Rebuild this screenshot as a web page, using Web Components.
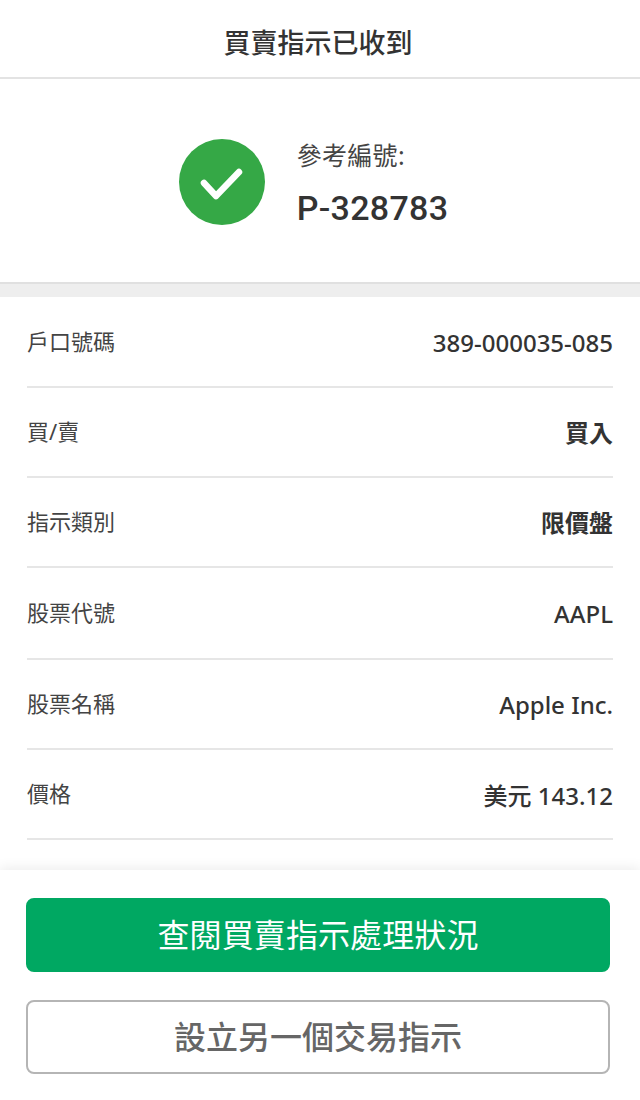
<!DOCTYPE html>
<html lang="zh-Hant">
<head>
<meta charset="utf-8">
<title>買賣指示已收到</title>
<style>
  html, body { margin: 0; height: 100%; background: #fff; }
  body {
    font-family: "Noto Sans", "Noto Sans CJK TC", sans-serif;
    color: #333;
  }
</style>
</head>
<body>
<order-page>
  <title-bar>買賣指示已收到</title-bar>
  <ref-banner label="參考編號:" code="P-328783"></ref-banner>
  <detail-list>
    <detail-row label="戶口號碼" value="389-000035-085"></detail-row>
    <detail-row label="買/賣" value="買入" strong></detail-row>
    <detail-row label="指示類別" value="限價盤" strong></detail-row>
    <detail-row label="股票代號" value="AAPL" tall></detail-row>
    <detail-row label="股票名稱" value="Apple Inc."></detail-row>
    <detail-row label="價格" value="美元 143.12"></detail-row>
  </detail-list>
  <action-bar>
    <action-button kind="primary">查閱買賣指示處理狀況</action-button>
    <action-button>設立另一個交易指示</action-button>
  </action-bar>
</order-page>
<script>
  function define(name, css, html) {
    customElements.define(name, class extends HTMLElement {
      constructor() {
        super();
        this.attachShadow({ mode: "open" });
      }
      connectedCallback() {
        this.shadowRoot.innerHTML = `<style>${css}</style>${typeof html === "function" ? html(this) : html}`;
      }
    });
  }

  define("order-page", `
    :host { display: flex; flex-direction: column; height: 1100px; overflow: hidden; }
  `, `<slot></slot>`);

  define("title-bar", `
    :host {
      display: flex; align-items: center; justify-content: center;
      height: 72px; padding: 5px 4px 0 0; border-bottom: 2px solid #e3e3e3;
      font-size: 27px; font-weight: 500; color: #333; box-sizing: content-box;
    }
  `, `<slot></slot>`);

  define("ref-banner", `
    :host {
      display: flex; align-items: center; justify-content: center; gap: 32px;
      height: 203px; border-bottom: 2px solid #e0e0e0; padding-right: 13px;
      box-sizing: content-box;
    }
    svg { display: block; margin-top: 2px; }
    .text { padding-top: 6px; }
    .label { font-size: 25px; line-height: 32px; color: #444; letter-spacing: 0.3px; }
    .code { font-family: Roboto, sans-serif; font-size: 34px; font-weight: 500; line-height: 40px; margin-top: 17px; letter-spacing: 0.3px; color: #333; }
  `, el => `
    <svg width="86" height="86" viewBox="0 0 86 86">
      <circle cx="43" cy="43" r="43" fill="#35a846"/>
      <path d="M25 44 L37 57 L60 33" fill="none" stroke="#fff" stroke-width="6.5" stroke-linecap="round" stroke-linejoin="round"/>
    </svg>
    <div class="text">
      <div class="label">${el.getAttribute("label")}</div>
      <div class="code">${el.getAttribute("code")}</div>
    </div>
  `);

  define("detail-list", `
    :host { display: block; border-top: 13px solid #eeeeee; padding: 1px 27px 0; flex: 1; }
  `, `<slot></slot>`);

  define("detail-row", `
    :host {
      display: flex; align-items: center; justify-content: space-between;
      height: 88px; border-bottom: 2px solid #e6e6e6; box-sizing: content-box;
    }
    :host([tall]) { height: 90px; }
    .label { font-size: 22px; color: #444; padding-bottom: 4px; }
    .value { font-size: 24px; font-weight: 500; color: #333; padding-top: 1px; }
    :host([strong]) .value { font-weight: 700; padding-top: 0; padding-bottom: 1px; }
  `, el => `
    <span class="label">${el.getAttribute("label")}</span>
    <span class="value">${el.getAttribute("value")}</span>
  `);

  define("action-bar", `
    :host {
      display: flex; flex-direction: column; gap: 28px;
      height: 230px; box-sizing: border-box; padding: 28px 30px 0 26px;
      background: #fff; box-shadow: 0 -2px 12px rgba(0,0,0,.08);
    }
  `, `<slot></slot>`);

  define("action-button", `
    :host {
      display: flex; align-items: center; justify-content: center;
      height: 74px; box-sizing: border-box; border-radius: 8px; padding-bottom: 4px;
      border: 2px solid #b5b5b5; color: #666;
      font-size: 32px; font-weight: 500;
    }
    :host([kind="primary"]) { background: #00a862; border-color: #00a862; color: #fff; font-weight: 400; letter-spacing: 0.1px; }
  `, `<slot></slot>`);
</script>
</body>
</html>
